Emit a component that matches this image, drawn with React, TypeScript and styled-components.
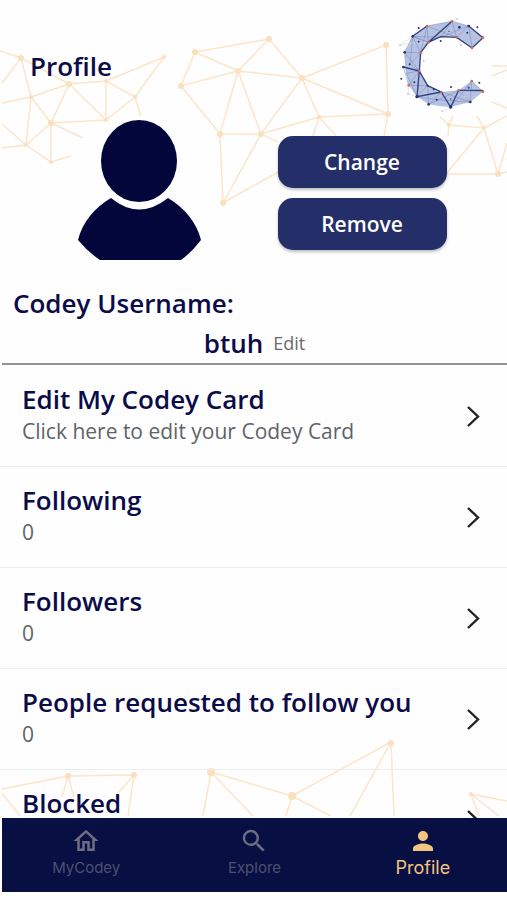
import React from "react";
import styled, { createGlobalStyle } from "styled-components";
import { MdOutlineHome, MdPerson, MdSearch } from "react-icons/md";

const GlobalStyle = createGlobalStyle`
  * { box-sizing: border-box; }
  body { margin: 0; background: #fefefe; }
  button { font: inherit; border: 0; padding: 0; background: none; cursor: pointer; }
`;

const navy = "#0b0b49";

const Screen = styled.div`
  position: relative;
  isolation: isolate;
  display: flex;
  flex-direction: column;
  height: 100vh;
  padding-bottom: 8px;
  overflow: hidden;
  color: ${navy};
  font-family: "Open Sans", "Noto Sans", sans-serif;
`;

const Backdrop = styled.svg<{ $edge: "top" | "bottom" }>`
  position: absolute;
  z-index: -1;
  left: 0;
  ${(p) => (p.$edge === "top" ? "top: 0;" : "bottom: 84px;")}
  width: 100%;
  height: auto;
  pointer-events: none;
`;

const Header = styled.header`
  display: flex;
  flex: none;
  justify-content: space-between;
  height: 120px;
  padding: 10px 0 0 30px;
`;

const PageTitle = styled.h1`
  margin: 38px 0 0;
  font-size: 26px;
  font-weight: 600;
  line-height: 36px;
`;

const Logo = styled.svg`
  width: 117px;
  height: 110px;
`;

const Account = styled.section`
  display: grid;
  flex: none;
  grid-template-columns: 1fr 1fr;
  justify-items: center;
  padding: 0 34px 0 29px;
`;

const Avatar = styled.svg`
  width: 124px;
  height: 141px;
`;

const Actions = styled.div`
  display: flex;
  flex-direction: column;
  gap: 10px;
  padding-top: 16px;
`;

const ActionButton = styled.button`
  && {
    width: 169px;
    height: 52px;
    border-radius: 15px;
    background: #242e68;
    box-shadow: 0 2px 3px rgba(0, 0, 0, 0.25);
    color: #fff;
    font-size: 21px;
    font-weight: 600;
  }
`;

const Username = styled.section`
  flex: none;
  margin: 23px 0 0 2px;
  border-bottom: 2px solid #929292;
`;

const UsernameLabel = styled.h2`
  margin: 0 0 0 11px;
  font-size: 26px;
  font-weight: 600;
  line-height: 38px;
`;

const UsernameValue = styled.div`
  display: flex;
  align-items: center;
  justify-content: center;
  gap: 10px;
  height: 41px;
  font-size: 26px;
  font-weight: 600;
  line-height: 40px;
`;

const EditButton = styled.button`
  && {
    color: #6a6a6e;
    font-size: 18px;
    font-weight: 400;
  }
`;

const List = styled.ul`
  flex: 1;
  min-height: 0;
  margin: 0;
  padding: 1px 0 0;
  overflow-y: auto;
  scrollbar-width: none;
  list-style: none;
`;

const Row = styled.li`
  border-bottom: 1px solid #ededef;
`;

const RowButton = styled.button`
  && {
    display: flex;
    align-items: center;
    justify-content: space-between;
    width: 100%;
    height: 100px;
    padding: 0 27px 0 22px;
    text-align: left;
  }
`;

const RowText = styled.span`
  display: flex;
  flex-direction: column;
  padding-bottom: 4px;
`;

const RowTitle = styled.span`
  color: ${navy};
  font-size: 26px;
  font-weight: 600;
  line-height: 34px;
`;

const RowDetail = styled.span`
  color: #5e6467;
  font-size: 21px;
  line-height: 31px;
`;

const ChevronIcon = styled.svg`
  width: 13px;
  height: 21px;
  fill: none;
  stroke: #222;
  stroke-width: 2.4;
`;

const TabBar = styled.nav`
  display: grid;
  flex: none;
  grid-template-columns: repeat(3, 1fr);
  height: 74px;
  margin-left: 2px;
  background: #080f43;
`;

const Tab = styled.button<{ $active?: boolean }>`
  && {
    display: flex;
    flex-direction: column;
    align-items: center;
    padding-top: 8px;
    color: ${(p) => (p.$active ? "#f3c480" : "#4d5070")};
    font-family: Inter, sans-serif;
    font-size: ${(p) => (p.$active ? 18 : 15)}px;
    line-height: 24px;
  }
  svg {
    flex: none;
    width: 30px;
    height: 30px;
    color: ${(p) => (p.$active ? "#f3c480" : "#6c6e82")};
  }
`;

const topLines =
  "M0 51 21 58 2 83M21 58 31 97 69 84ZM31 97 2 103M31 97 51 123 69 84 106 81 164 57 135 97 106 81V120L69 84M31 97 26 145 51 123 106 120 135 97 141 116M51 123 83 138M51 123V162L26 145 2 124M26 145 2 148M51 162 71 156" +
  "M195 52 269 39 302 78 386 45 388 114 319 117 261 134H220L223 203 261 134 302 78 238 71 195 52 181 86 238 71 269 39M181 86 220 134 238 71 261 134 278 142M302 78 319 117 313 136M302 78 388 114 384 136M319 117 336 136M223 203 278 172" +
  "M492 66H507M492 76 507 70M492 102 507 108M440 117 449 125 453 116M449 125 484 128 477 116M484 128 507 116M484 128 498 174 446 174 484 128M449 125 448 136M498 174 507 172M498 174 507 143";

const topNodes = [
  [21, 58, 3], [31, 97, 2], [69, 84, 3], [106, 81, 2], [164, 57, 2], [135, 97, 2], [106, 120, 2], [51, 123, 3], [26, 145, 2], [51, 162, 2],
  [195, 52, 3], [269, 39, 3], [181, 86, 3], [238, 71, 3], [302, 78, 3], [386, 45, 3], [388, 114, 3], [319, 117, 2], [261, 134, 3], [220, 134, 3], [223, 203, 3],
  [449, 125, 2], [484, 128, 2], [498, 174, 3],
];

const bottomLines =
  "M2 49 68 36 134 35 118 53M134 35 128 76M62 57 68 36 74 57M2 53 20 76M203 76 211 32 253 76M211 32 292 56 391 2 350 76M286 76 292 56 331 76M391 2 394 76M507 61 471 54 479 76M471 54 499 76";

const bottomNodes = [[68, 36, 3], [134, 35, 3], [211, 32, 4], [292, 56, 4], [391, 3, 3], [471, 54, 2]];

function Network({ edge }: { edge: "top" | "bottom" }) {
  const top = edge === "top";
  return (
    <Backdrop $edge={edge} viewBox={top ? "0 0 507 210" : "0 0 507 76"} aria-hidden="true">
      <path d={top ? topLines : bottomLines} fill="none" stroke="#fce5c9" strokeWidth="1.5" />
      {(top ? topNodes : bottomNodes).map(([x, y, r]) => (
        <circle key={`${x}-${y}`} cx={x} cy={y} r={r} fill="#fae0bd" />
      ))}
    </Backdrop>
  );
}

const blueDots = [
  [68, 79, 4], [44, 127, 4], [40, 171, 4], [81, 260, 5], [116, 283, 4], [182, 291, 5], [241, 276, 4], [236, 48, 4], [208, 52, 4],
  [152, 93, 3], [113, 227, 3], [86, 54, 3], [262, 52, 3], [34, 206, 3], [59, 163, 3], [86, 95, 3], [73, 217, 3], [131, 238, 3],
  [140, 269, 3], [183, 231, 3], [268, 218, 3], [232, 68, 3], [177, 64, 2], [182, 267, 2], [236, 233, 3],
];
const orangeDots = [
  [111, 48], [186, 34], [115, 97], [92, 128], [88, 183], [56, 226], [154, 246], [206, 241], [245, 213], [279, 245], [279, 83], [246, 114], [200, 82],
];
const faintDots = [[30, 106], [101, 153], [202, 27], [213, 105], [253, 94], [54, 252], [157, 304], [225, 260], [60, 99]];

function CodeyLogo() {
  return (
    <Logo viewBox="0 0 351 330" role="img" aria-label="Codey">
      <path
        d="M279 83 236 48 186 34 111 48 68 79 44 127 49 190 56 226 81 260 116 283 150 289 182 291 241 276 279 245 245 213 206 241 154 246 113 227 88 183 92 128 115 97 152 82 200 82 246 114Z"
        fill="#b5c2e2"
      />
      <path
        d="M30 106 68 79 86 54M30 106 60 99M56 226 54 252 81 260M157 304 182 291M44 127 60 99 115 97M186 34 202 27"
        fill="none" stroke="#d9dce8" strokeWidth="2"
      />
      <path
        d="M68 79 111 48 186 34 236 48 200 82 246 114 236 48 279 83M186 34 200 82 111 48 115 97 68 79 92 128 44 127 68 79 152 82 186 34M111 48 92 128M236 48 152 82M44 127 88 183 49 190 44 127M68 79 60 163 92 128M40 171 56 226 88 183 81 260 49 190M56 226 113 227 81 260 154 246 116 283 113 227M154 246 182 291 206 241 241 276 245 213 279 245M116 283 206 241 279 245M182 291 245 213M140 269 241 276M68 79 115 97M186 34 115 97M60 163 88 183M81 260 140 269M154 246 241 276"
        fill="none" stroke="#7586b9" strokeWidth="1.5"
      />
      <path
        d="M236 48 279 83 246 114 200 82 152 80 115 97 92 128 88 183 113 227 154 246 182 291 206 241H279M40 171 88 183 81 260 154 246M115 97 186 34M68 79 111 48"
        fill="none" stroke="#35447f" strokeWidth="4"
      />
      {faintDots.map(([x, y]) => <circle key={`${x}-${y}`} cx={x} cy={y} r="3" fill="#d7c5ce" />)}
      {blueDots.map(([x, y, r]) => <circle key={`${x}-${y}`} cx={x} cy={y} r={r} fill="#2b3274" />)}
      {orangeDots.map(([x, y]) => <circle key={`${x}-${y}`} cx={x} cy={y} r="4" fill="#d9644e" />)}
    </Logo>
  );
}

const rows = [
  { title: "Edit My Codey Card", detail: "Click here to edit your Codey Card" },
  { title: "Following", detail: "0" },
  { title: "Followers", detail: "0" },
  { title: "People requested to follow you", detail: "0" },
  { title: "Blocked", detail: "0" },
];

export default function App() {
  return (
    <Screen>
      <GlobalStyle />
      <Network edge="top" />
      <Network edge="bottom" />
      <Header>
        <PageTitle>Profile</PageTitle>
        <CodeyLogo />
      </Header>
      <Account>
        <Avatar viewBox="0 0 124 141" role="img" aria-label="Profile picture" fill="#02063b">
          <ellipse cx="61" cy="41" rx="38" ry="41" />
          <path d="M33 78Q61 101 90 78C107 88 119 103 123 120Q114 132 103 140H22Q10 132 0 120C4 103 17 87 33 78Z" />
        </Avatar>
        <Actions>
          <ActionButton type="button">Change</ActionButton>
          <ActionButton type="button">Remove</ActionButton>
        </Actions>
      </Account>
      <Username>
        <UsernameLabel>Codey Username:</UsernameLabel>
        <UsernameValue>
          <span>btuh</span>
          <EditButton type="button">Edit</EditButton>
        </UsernameValue>
      </Username>
      <List>
        {rows.map((row) => (
          <Row key={row.title}>
            <RowButton type="button">
              <RowText>
                <RowTitle>{row.title}</RowTitle>
                <RowDetail>{row.detail}</RowDetail>
              </RowText>
              <ChevronIcon viewBox="0 0 13 21" aria-hidden="true">
                <path d="M1 1 11 10.5 1 20" />
              </ChevronIcon>
            </RowButton>
          </Row>
        ))}
      </List>
      <TabBar>
        <Tab type="button"><MdOutlineHome />MyCodey</Tab>
        <Tab type="button"><MdSearch />Explore</Tab>
        <Tab type="button" $active aria-current="page"><MdPerson />Profile</Tab>
      </TabBar>
    </Screen>
  );
}
